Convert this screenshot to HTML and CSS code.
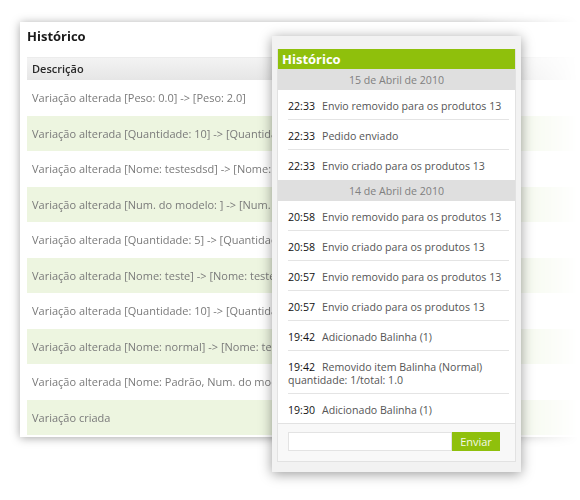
FILE: index.html
```html
<!DOCTYPE html>
<html lang="pt">
<head>
<meta charset="utf-8">
<link rel="stylesheet" href="styles.css">
</head>
<body>
<div class="stage">
  <div class="back">
    <div class="panel">
      <h2 class="panel-title">Histórico</h2>
      <div class="table">
        <div class="thead">Descrição</div>
        <div class="row">Variação alterada [Peso: 0.0] -&gt; [Peso: 2.0]</div>
        <div class="row alt">Variação alterada [Quantidade: 10] -&gt; [Quantidade: 5]</div>
        <div class="row">Variação alterada [Nome: testesdsd] -&gt; [Nome: Normal]</div>
        <div class="row alt">Variação alterada [Num. do modelo: ] -&gt; [Num. do modelo: 1]</div>
        <div class="row">Variação alterada [Quantidade: 5] -&gt; [Quantidade: 10]</div>
        <div class="row alt">Variação alterada [Nome: teste] -&gt; [Nome: testesdsd]</div>
        <div class="row">Variação alterada [Quantidade: 10] -&gt; [Quantidade: 5]</div>
        <div class="row alt">Variação alterada [Nome: normal] -&gt; [Nome: teste]</div>
        <div class="row">Variação alterada [Nome: Padrão, Num. do modelo: ] -&gt; [Nome: normal]</div>
        <div class="row alt">Variação criada</div>
      </div>
    </div>
  </div>

  <div class="popup">
    <div class="popup-inner">
      <div class="popup-title">Histórico</div>
      <div class="date">15 de Abril de 2010</div>
      <ul class="items">
        <li><span class="time">22:33</span><span class="desc">Envio removido para os produtos 13</span></li>
        <li><span class="time">22:33</span><span class="desc">Pedido enviado</span></li>
        <li><span class="time">22:33</span><span class="desc">Envio criado para os produtos 13</span></li>
      </ul>
      <div class="date second">14 de Abril de 2010</div>
      <ul class="items">
        <li><span class="time">20:58</span><span class="desc">Envio removido para os produtos 13</span></li>
        <li><span class="time">20:58</span><span class="desc">Envio criado para os produtos 13</span></li>
        <li><span class="time">20:57</span><span class="desc">Envio removido para os produtos 13</span></li>
        <li><span class="time">20:57</span><span class="desc">Envio criado para os produtos 13</span></li>
        <li><span class="time">19:42</span><span class="desc">Adicionado Balinha (1)</span></li>
        <li><span class="time">19:42</span><span class="desc">Removido item Balinha (Normal) quantidade: 1/total: 1.0</span></li>
        <li><span class="time">19:30</span><span class="desc">Adicionado Balinha (1)</span></li>
      </ul>
      <form class="footer">
        <input class="field" type="text">
        <button class="send" type="button">Enviar</button>
      </form>
    </div>
  </div>
</div>
</body>
</html>
```
FILE: styles.css
```css
html, body {
  margin: 0;
  padding: 0;
  background: #fff;
}
body {
  font-family: "Open Sans", "Noto Sans", sans-serif;
  font-size: 11px;
  overflow: hidden;
}
.stage {
  position: relative;
  width: 580px;
  height: 500px;
  overflow: hidden;
}
.back {
  width: 580px;
  padding: 22px 0 30px 20px;
  box-sizing: border-box;
  -webkit-mask-image: linear-gradient(to right, #000 470px, rgba(0,0,0,0) 578px);
  mask-image: linear-gradient(to right, #000 470px, rgba(0,0,0,0) 578px);
}
.panel {
  width: 600px;
  background: #fff;
  box-shadow: 0 1px 9px rgba(0,0,0,0.35);
  padding: 7px 0 2px 7px;
  box-sizing: border-box;
}
.panel-title {
  margin: 0;
  height: 28px;
  line-height: 14px;
  padding-top: 0;
  font-size: 13px;
  font-weight: 700;
  color: #1a1a1a;
  box-sizing: border-box;
}
.thead {
  height: 22px;
  line-height: 22px;
  padding-left: 5px;
  background: linear-gradient(#f3f3f3, #e6e6e6);
  border-top: 1px solid #ececec;
  color: #2a2a2a;
  font-weight: 600;
}
.row {
  height: 35.5px;
  line-height: 35.5px;
  padding-left: 5px;
  color: #7a7a7a;
  white-space: nowrap;
}
.row.alt {
  background: #edf5e0;
}
.popup {
  position: absolute;
  left: 272px;
  top: 36px;
  width: 249px;
  background: #f2f2f2;
  padding: 13px 5px 10px;
  box-sizing: border-box;
  box-shadow: 0 2px 12px rgba(0,0,0,0.4);
  font-size: 10.6px;
}
.popup-inner {
  background: #fff;
  border: 1px solid #e2e2e2;
  border-top: 0;
}
.popup-title {
  background: #8fc00c;
  color: #fff;
  font-size: 13px;
  font-weight: 700;
  height: 20px;
  line-height: 20px;
  padding-left: 4px;
}
.date {
  background: #dfdfdf;
  color: #808080;
  text-align: center;
  height: 21px;
  line-height: 19px;
  padding-top: 2px;
  box-sizing: border-box;
}
.date.second {
  margin-top: 1px;
}
.items {
  list-style: none;
  margin: 0;
  padding: 0 10px;
}
.items li {
  padding: 10px 0 6px;
  margin-right: -4px;
  line-height: 13px;
  color: #555;
  border-bottom: 1px solid #e4e4e4;
}
.items li:last-child {
  border-bottom: 0;
}
.time {
  color: #111;
  margin-right: 7px;
}
.footer {
  margin: 0;
  border-top: 1px solid #e2e2e2;
  background: #f8f8f8;
  padding: 8px 15px 10px 10px;
  display: flex;
  align-items: stretch;
}
.field {
  flex: 1;
  min-width: 0;
  height: 19px;
  margin: 0;
  border: 1px solid #e3e3e3;
  background: #fff;
  box-sizing: border-box;
  padding: 0;
}
.send {
  width: 48px;
  height: 19px;
  margin: 0;
  border: 0;
  background: #8fc00c;
  color: #f4f9e8;
  font-family: inherit;
  font-size: 11px;
  padding: 0;
}
```
